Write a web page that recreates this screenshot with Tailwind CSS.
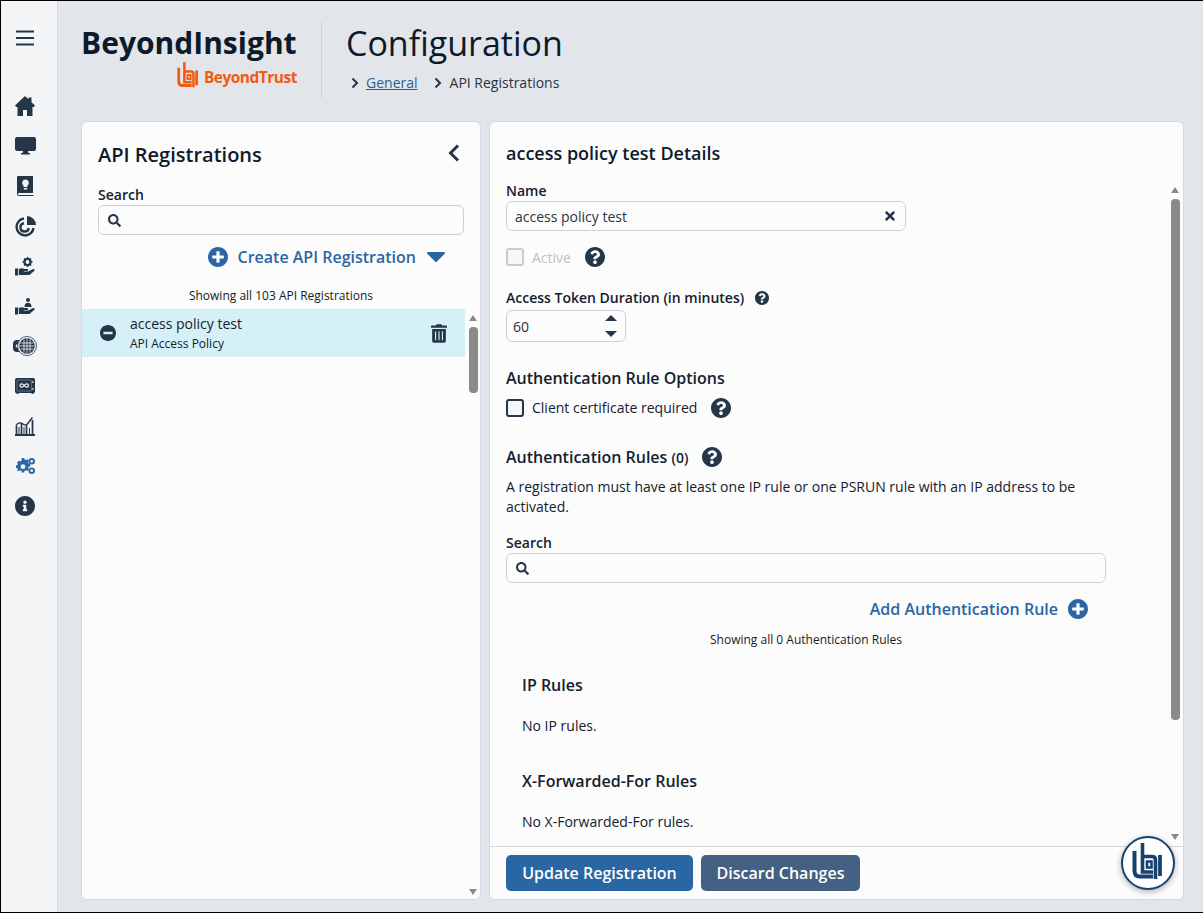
<!DOCTYPE html>
<html lang="en">
<head>
<meta charset="utf-8">
<title>API Registrations</title>
<script src="https://cdn.jsdelivr.net/npm/@tailwindcss/browser@4"></script>
</head>
<body class="font-['Open_Sans',sans-serif] text-[14px] text-[#14202e]">
<div class="w-[1203px] h-[913px] flex border-t border-l border-b border-black bg-[#e2e6eb] overflow-hidden">
  <!-- sidebar -->
  <nav class="w-[57px] shrink-0 bg-[#f3f5f7] border-r border-[#d5d9df] flex flex-col items-center pr-[8px] text-[#243648]">
    <svg class="mt-[29px] w-[18px] h-[16px]" viewBox="0 0 18 16"><path d="M0 1.500h18M0 8h18M0 14.500h18" stroke="#243648" stroke-width="2"/></svg>
    <div class="mt-[40px] flex flex-col">
      <div class="h-[40px] w-[40px] flex items-center justify-center"><svg class="w-[20px] h-[20px]" viewBox="0 0 20 20" fill="currentColor"><path d="M10 0l3.500 3.300V1.500h3v4.700L20 9.500 18.800 11H17.500v9H12v-6H8v6H2.500v-9H1.200L0 9.500z"/></svg></div>
      <div class="h-[40px] w-[40px] flex items-center justify-center"><svg class="w-[21px] h-[18px]" viewBox="0 0 21 18" fill="currentColor"><path d="M2 0h17a2 2 0 0 1 2 2v10a2 2 0 0 1-2 2h-6l.4 2H15v1.500H6V16h1.600L8 14H2a2 2 0 0 1-2-2V2a2 2 0 0 1 2-2z"/></svg></div>
      <div class="h-[40px] w-[40px] flex items-center justify-center"><svg class="w-[17px] h-[20px]" viewBox="0 0 17 20"><path d="M1 0h15v17H2a1 1 0 0 0 0 2h14.500v1H2a2 2 0 0 1-2-2V1a1 1 0 0 1 1-1z" fill="currentColor"/><path d="M8.500 3.500a3.400 3.400 0 0 0-2 6.100V11h4V9.600a3.400 3.400 0 0 0-2-6.100zM6.800 12h3.400v1.400H6.800z" fill="#f3f5f7"/></svg></div>
      <div class="h-[40px] w-[40px] flex items-center justify-center"><svg class="w-[21px] h-[21px]" viewBox="0 0 21 21" fill="none" stroke="currentColor" stroke-width="2.400"><path d="M9 2.500a8.500 8.500 0 1 0 9.500 9.500"/><path d="M9 7.200a4.200 4.200 0 1 0 4.800 4.800"/><path d="M12 0a9 9 0 0 1 9 9h-9z" fill="currentColor" stroke="none"/></svg></div>
      <div class="h-[40px] w-[40px] flex items-center justify-center"><svg class="w-[20px] h-[19px]" viewBox="0 0 20 19" fill="currentColor"><path d="M0 11.500h3.200V18.500H0zM4 12c2-1.100 3.800-1 5.500 0h2.700a1 1 0 0 1 0 2H8.800v.5h4.400l4.900-2.400a1.100 1.100 0 0 1 1.300 1.700L14.500 18H4z"/><circle cx="12.500" cy="5" r="3" fill="none" stroke="currentColor" stroke-width="2.200"/><path d="M12.500 0v2M12.500 8v2M7.500 5h2M15.500 5h2M9 1.500l1.400 1.400M14.600 7.100L16 8.500M16 1.500l-1.400 1.400M10.400 7.100L9 8.500" stroke="currentColor" stroke-width="1.600"/></svg></div>
      <div class="h-[40px] w-[40px] flex items-center justify-center"><svg class="w-[20px] h-[17px]" viewBox="0 0 20 17" fill="currentColor"><path d="M0 9.500h3.200v7H0zM4 10c2-1.100 3.800-1 5.500 0h2.700a1 1 0 0 1 0 2H8.800v.5h4.400l4.900-2.400a1.100 1.100 0 0 1 1.300 1.700L14.500 16H4z"/><circle cx="13" cy="2" r="2"/><path d="M9.500 9c0-3 1.300-4.300 3.500-4.300S16.500 6 16.500 9z"/></svg></div>
      <div class="h-[40px] w-[40px] flex items-center justify-center"><svg class="w-[24px] h-[24px]" viewBox="0 -3 24 24"><path d="M4 3h8v12H4a4 4 0 0 1-4-4V7a4 4 0 0 1 4-4z" fill="currentColor"/><circle cx="4.500" cy="9" r="1.800" fill="#f3f5f7"/><circle cx="14" cy="9" r="9.500" fill="#f3f5f7" stroke="currentColor" stroke-width=".8"/><circle cx="14" cy="9" r="7.800" fill="currentColor"/><path d="M11 2.500v13M14 1.500v15M17 2.500v13M7.500 6h13M6.500 9h15M7.500 12h13" stroke="#f3f5f7" stroke-width=".8"/></svg></div>
      <div class="h-[40px] w-[40px] flex items-center justify-center"><svg class="w-[20px] h-[16px]" viewBox="0 0 20 16"><rect width="20" height="15" rx="1.500" fill="currentColor"/><rect x="17.300" y="3" width="1" height="2" fill="#f3f5f7"/><rect x="17.300" y="10" width="1" height="2" fill="#f3f5f7"/><rect x="2" y="2" width="14.500" height="11" rx=".5" fill="currentColor" stroke="#8795a3" stroke-width=".6"/><path d="M9.200 7.500c-1-1.300-1.700-1.700-2.500-1.700a1.700 1.700 0 0 0 0 3.400c.8 0 1.500-.4 2.500-1.700s1.700-1.700 2.500-1.700a1.700 1.700 0 0 1 0 3.400c-.8 0-1.500-.4-2.500-1.700z" fill="none" stroke="#f3f5f7" stroke-width="1.200"/><path d="M1.500 15h2v1h-2zM16.500 15h2v1h-2z" fill="currentColor"/></svg></div>
      <div class="h-[40px] w-[40px] flex items-center justify-center"><svg class="w-[20px] h-[20px]" viewBox="0 0 20 20" fill="none" stroke="currentColor"><path d="M0 19h20" stroke-width="2"/><path d="M1.500 18V9.500M6.500 18V7.500M11.500 18V9.500M17.500 18V4" stroke-width="1.700"/><path d="M4 18v-7M9 18v-7M14.500 18v-6" stroke-width="1"/><path d="M1 9.500c1.500-2.500 3-3 5-2.500s3 2.500 5.500 2L17.500 1.500" stroke-width="1.400"/></svg></div>
      <div class="h-[40px] w-[40px] flex items-center justify-center"><svg class="w-[19px] h-[16px]" viewBox="0 0 19 16" fill="#2a66a3"><path fill-rule="evenodd" d="M5.800 2.500h2.400l.4 1.600 1.100.5 1.500-.8 1.700 1.700-.8 1.500.5 1.100 1.600.4v2.400l-1.600.4-.5 1.100.8 1.500-1.700 1.700-1.500-.8-1.100.5-.4 1.600H5.800l-.4-1.600-1.100-.5-1.500.8L1.100 15.400l.8-1.500-.5-1.100L-.2 12.400V10l1.600-.4.500-1.100-.8-1.500 1.700-1.700 1.500.8 1.100-.5zM7 8.800a2.400 2.400 0 1 0 0 4.800 2.400 2.400 0 0 0 0-4.800z" transform="translate(0 -2.500)"/><circle cx="15.700" cy="3.300" r="2.300" fill="none" stroke="#2a66a3" stroke-width="1.900"/><circle cx="15.700" cy="12.700" r="2.300" fill="none" stroke="#2a66a3" stroke-width="1.900"/></svg></div>
      <div class="h-[40px] w-[40px] flex items-center justify-center"><svg class="w-[20px] h-[20px]" viewBox="8 8 496 496" fill="currentColor"><path d="M256 8C119.043 8 8 119.083 8 256c0 136.997 111.043 248 248 248s248-111.003 248-248C504 119.083 392.957 8 256 8zm0 110c23.196 0 42 18.804 42 42s-18.804 42-42 42-42-18.804-42-42 18.804-42 42-42zm56 254c0 6.627-5.373 12-12 12h-88c-6.627 0-12-5.373-12-12v-24c0-6.627 5.373-12 12-12h12v-64h-12c-6.627 0-12-5.373-12-12v-24c0-6.627 5.373-12 12-12h64c6.627 0 12 5.373 12 12v100h12c6.627 0 12 5.373 12 12v24z"/></svg></div>
    </div>
  </nav>

  <!-- main -->
  <div class="flex-1 min-w-0 flex flex-col pl-[23px] pr-[19px]">
    <header class="h-[120px] shrink-0 flex items-start pt-[21px]">
      <div class="w-[240px] flex flex-col">
        <div class="text-[30px] leading-[40px] font-bold text-[#0d1a29] mt-[1px]">BeyondInsight</div>
        <div class="flex justify-end items-center gap-[6px] pr-[24px] mt-[-2px]">
          <svg class="w-[21px] h-[28px]" viewBox="12 8 30 37" fill="none" stroke="#f15a0f"><path d="M14.500 16V36Q14.500 41.500 20 41.500H33" stroke-width="4"/><path d="M22.500 8V37H33" stroke-width="3.600"/><path d="M22.500 21.500H32Q35.500 21.500 35.500 25V44" stroke-width="3.600"/><rect x="27" y="26.500" width="4.500" height="6" stroke-width="2.600"/><path d="M40 20V41" stroke-width="3.800"/></svg>
          <span class="text-[15.500px] leading-[20px] font-bold text-[#f15a0f] tracking-[-0.500px] pt-[3px]">BeyondTrust</span>
        </div>
      </div>
      <div class="w-px h-[76px] bg-[#cdd2d8]"></div>
      <div class="ml-[24px] flex flex-col mt-[-1px]">
        <h1 class="text-[34px] leading-[44px] text-[#0d1a29] font-normal">Configuration</h1>
        <div class="flex items-center mt-[8px] ml-[5px] leading-[20px]">
          <svg class="w-[8px] h-[12px] mr-[7px]" viewBox="0 0 8 12" fill="none" stroke="#243648" stroke-width="2"><path d="M1.500 1.500L6 6l-4.500 4.500"/></svg>
          <a class="text-[#2a5f97] underline">General</a>
          <svg class="w-[8px] h-[12px] ml-[16px] mr-[8px]" viewBox="0 0 8 12" fill="none" stroke="#243648" stroke-width="2"><path d="M1.500 1.500L6 6l-4.500 4.500"/></svg>
          <span class="text-[#2b3440]">API Registrations</span>
        </div>
      </div>
    </header>

    <div class="flex gap-[8px] h-[779px]">
      <!-- left panel -->
      <section class="w-[400px] shrink-0 bg-[#fcfcfc] border border-[#d5d9df] rounded-[6px] flex flex-col overflow-hidden">
        <div class="px-[16px]">
          <div class="flex justify-between pt-[18px]">
            <h2 class="text-[20px] leading-[30px] font-semibold text-[#0d1a29]">API Registrations</h2>
            <svg class="w-[12px] h-[20px] mr-[4px] mt-[3px]" viewBox="0 0 12 20" fill="none" stroke="#243648" stroke-width="3"><path d="M10 2.500L2.500 10l7.500 7.500"/></svg>
          </div>
          <label class="block mt-[15px] leading-[20px] font-semibold">Search</label>
          <div class="w-[366px] h-[30px] border border-[#ccd0d5] rounded-[6px] flex items-center pl-[9px]">
            <svg class="w-[13px] h-[13px]" viewBox="0 0 512 512" fill="#243648"><path d="M505 442.700L405.300 343c-4.500-4.500-10.600-7-17-7H372c27.600-35.300 44-79.700 44-128C416 93.100 322.900 0 208 0S0 93.100 0 208s93.100 208 208 208c48.300 0 92.700-16.400 128-44v16.300c0 6.400 2.500 12.500 7 17l99.700 99.700c9.400 9.400 24.600 9.400 33.900 0l28.300-28.300c9.400-9.400 9.400-24.600.1-34zM208 336c-70.700 0-128-57.200-128-128 0-70.700 57.200-128 128-128 70.700 0 128 57.200 128 128 0 70.700-57.200 128-128 128z"/></svg>
          </div>
          <div class="flex items-center justify-end w-[366px] h-[24px] mt-[10px] pr-[19px] text-[#2a66a3]">
            <svg class="w-[20px] h-[20px]" viewBox="8 8 496 496" fill="currentColor"><path d="M256 8C119 8 8 119 8 256s111 248 248 248 248-111 248-248S393 8 256 8zm144 276c0 6.600-5.400 12-12 12h-92v92c0 6.600-5.400 12-12 12h-56c-6.600 0-12-5.400-12-12v-92h-92c-6.600 0-12-5.400-12-12v-56c0-6.600 5.400-12 12-12h92v-92c0-6.600 5.400-12 12-12h56c6.600 0 12 5.400 12 12v92h92c6.600 0 12 5.400 12 12v56z"/></svg>
            <span class="text-[16px] font-semibold ml-[10px]">Create API Registration</span>
            <svg class="w-[18px] h-[10px] ml-[11px]" viewBox="0 0 18 10" fill="currentColor"><path d="M1 0h16a1 1 0 0 1 .7 1.700L9.700 9.700a1 1 0 0 1-1.400 0L.3 1.700A1 1 0 0 1 1 0z"/></svg>
          </div>
          <div class="w-[366px] text-center text-[12px] leading-[16px] mt-[19px] text-[#1a1a1a]">Showing all 103 API Registrations</div>
        </div>
        <div class="flex flex-1 min-h-0 mt-[5px]">
          <div class="w-[383px] shrink-0">
            <div class="h-[48px] bg-[#d6f0f7] flex items-center pl-[18px] pr-[18px]">
              <svg class="w-[16px] h-[16px]" viewBox="8 8 496 496" fill="#243648"><path d="M256 8C119 8 8 119 8 256s111 248 248 248 248-111 248-248S393 8 256 8zM124 296c-6.600 0-12-5.400-12-12v-56c0-6.600 5.400-12 12-12h264c6.600 0 12 5.400 12 12v56c0 6.600-5.400 12-12 12H124z"/></svg>
              <div class="ml-[14px] flex-1">
                <div class="leading-[20px] text-[#14202e]">access policy test</div>
                <div class="text-[12px] leading-[16px] mt-[2px] text-[#14202e]">API Access Policy</div>
              </div>
              <svg class="w-[16px] h-[19px]" viewBox="0 0 448 512" fill="#243648"><path d="M32 464a48 48 0 0 0 48 48h288a48 48 0 0 0 48-48V128H32zm272-256a16 16 0 0 1 32 0v224a16 16 0 0 1-32 0zm-96 0a16 16 0 0 1 32 0v224a16 16 0 0 1-32 0zm-96 0a16 16 0 0 1 32 0v224a16 16 0 0 1-32 0zM432 32H312l-9.400-18.700A24 24 0 0 0 281.100 0H166.800a23.720 23.720 0 0 0-21.400 13.300L136 32H16A16 16 0 0 0 0 48v32a16 16 0 0 0 16 16h416a16 16 0 0 0 16-16V48a16 16 0 0 0-16-16z"/></svg>
            </div>
          </div>
          <div class="w-[12px] ml-[2px] flex flex-col items-center pb-[4px] pt-[6px]">
            <div class="w-0 h-0 border-l-[4px] border-r-[4px] border-b-[6px] border-l-transparent border-r-transparent border-b-[#8a8a8a]"></div>
            <div class="w-[9px] h-[66px] rounded-[4px] bg-[#8a8a8a] mt-[6px]"></div>
            <div class="flex-1"></div>
            <div class="w-0 h-0 border-l-[4px] border-r-[4px] border-t-[6px] border-l-transparent border-r-transparent border-t-[#8a8a8a]"></div>
          </div>
        </div>
      </section>

      <!-- right panel -->
      <section class="w-[695px] shrink-0 bg-[#fcfcfc] border border-[#d5d9df] rounded-[6px] flex flex-col overflow-hidden relative">
        <h2 class="text-[18px] leading-[24px] font-semibold text-[#0d1a29] pl-[16px] pt-[19px] h-[56px] shrink-0">access policy test Details</h2>
        <div class="flex h-[668px] shrink-0">
          <div class="flex-1 min-w-0 overflow-hidden pl-[16px]">
            <label class="block mt-[3px] leading-[20px] font-semibold">Name</label>
            <div class="w-[400px] h-[30px] border border-[#ccd0d5] rounded-[6px] flex items-center pl-[8px] pr-[9px] justify-between">
              <span class="text-[#2b3440]">access policy test</span>
              <svg class="w-[12px] h-[14px]" viewBox="0 0 352 512" fill="#243648"><path d="M242.720 256l100.070-100.070c12.280-12.280 12.280-32.190 0-44.480l-22.240-22.240c-12.280-12.280-32.190-12.280-44.480 0L176 189.280 75.930 89.210c-12.280-12.280-32.190-12.280-44.480 0L9.210 111.450c-12.280 12.280-12.280 32.190 0 44.480L109.280 256 9.210 356.070c-12.280 12.280-12.280 32.190 0 44.480l22.240 22.240c12.280 12.280 32.200 12.280 44.480 0L176 322.720l100.070 100.070c12.280 12.280 32.200 12.280 44.480 0l22.240-22.240c12.280-12.280 12.280-32.190 0-44.480L242.720 256z"/></svg>
            </div>
            <div class="flex items-center h-[20px] mt-[16px]">
              <span class="w-[18px] h-[18px] rounded-[3px] border-2 border-[#c9cccf] bg-[#f6f7f8]"></span>
              <span class="ml-[8px] text-[#bdc0c4]">Active</span>
              <svg class="w-[20px] h-[20px] ml-[14px]" viewBox="8 8 496 496" fill="#243648"><path d="M504 256c0 136.997-111.043 248-248 248S8 392.997 8 256C8 119.083 119.043 8 256 8s248 111.083 248 248zM262.655 90c-54.497 0-89.255 22.957-116.549 63.758-3.536 5.286-2.353 12.415 2.715 16.258l34.699 26.310c5.205 3.947 12.621 3.008 16.665-2.122 17.864-22.658 30.113-35.797 57.303-35.797 20.429 0 45.698 13.148 45.698 32.958 0 14.976-12.363 22.667-32.534 33.976C247.128 238.528 216 254.941 216 296v4c0 6.627 5.373 12 12 12h56c6.627 0 12-5.373 12-12v-1.333c0-28.462 83.186-29.647 83.186-106.667 0-58.002-60.165-102-116.531-102zM256 338c-25.365 0-46 20.635-46 46 0 25.364 20.635 46 46 46s46-20.636 46-46c0-25.365-20.635-46-46-46z"/></svg>
            </div>
            <div class="flex items-center h-[20px] mt-[21px]">
              <span class="font-semibold mb-[2px]">Access Token Duration (in minutes)</span>
              <svg class="w-[14px] h-[14px] ml-[11px]" viewBox="8 8 496 496" fill="#243648"><path d="M504 256c0 136.997-111.043 248-248 248S8 392.997 8 256C8 119.083 119.043 8 256 8s248 111.083 248 248zM262.655 90c-54.497 0-89.255 22.957-116.549 63.758-3.536 5.286-2.353 12.415 2.715 16.258l34.699 26.310c5.205 3.947 12.621 3.008 16.665-2.122 17.864-22.658 30.113-35.797 57.303-35.797 20.429 0 45.698 13.148 45.698 32.958 0 14.976-12.363 22.667-32.534 33.976C247.128 238.528 216 254.941 216 296v4c0 6.627 5.373 12 12 12h56c6.627 0 12-5.373 12-12v-1.333c0-28.462 83.186-29.647 83.186-106.667 0-58.002-60.165-102-116.531-102zM256 338c-25.365 0-46 20.635-46 46 0 25.364 20.635 46 46 46s46-20.636 46-46c0-25.365-20.635-46-46-46z"/></svg>
            </div>
            <div class="w-[120px] h-[32px] mt-[2px] border border-[#ccd0d5] rounded-[6px] flex items-center justify-between pl-[6px] pr-[8px]">
              <span class="text-[#2b3440]">60</span>
              <div class="flex flex-col gap-[10px]">
                <div class="w-0 h-0 border-l-[6px] border-r-[6px] border-b-[6px] border-l-transparent border-r-transparent border-b-[#243648]"></div>
                <div class="w-0 h-0 border-l-[6px] border-r-[6px] border-t-[6px] border-l-transparent border-r-transparent border-t-[#243648]"></div>
              </div>
            </div>
            <h3 class="text-[16px] leading-[24px] font-semibold mt-[24px] text-[#14202e]">Authentication Rule Options</h3>
            <div class="flex items-center h-[20px] mt-[8px]">
              <span class="w-[18px] h-[18px] rounded-[3px] border-2 border-[#243648] bg-[#f6f7f8]"></span>
              <span class="ml-[8px] mb-[2px]">Client certificate required</span>
              <svg class="w-[20px] h-[20px] ml-[14px]" viewBox="8 8 496 496" fill="#243648"><path d="M504 256c0 136.997-111.043 248-248 248S8 392.997 8 256C8 119.083 119.043 8 256 8s248 111.083 248 248zM262.655 90c-54.497 0-89.255 22.957-116.549 63.758-3.536 5.286-2.353 12.415 2.715 16.258l34.699 26.310c5.205 3.947 12.621 3.008 16.665-2.122 17.864-22.658 30.113-35.797 57.303-35.797 20.429 0 45.698 13.148 45.698 32.958 0 14.976-12.363 22.667-32.534 33.976C247.128 238.528 216 254.941 216 296v4c0 6.627 5.373 12 12 12h56c6.627 0 12-5.373 12-12v-1.333c0-28.462 83.186-29.647 83.186-106.667 0-58.002-60.165-102-116.531-102zM256 338c-25.365 0-46 20.635-46 46 0 25.364 20.635 46 46 46s46-20.636 46-46c0-25.365-20.635-46-46-46z"/></svg>
            </div>
            <div class="flex items-center h-[24px] mt-[27px]">
              <h3 class="text-[16px] font-semibold text-[#14202e]">Authentication Rules <span class="text-[14px]">(0)</span></h3>
              <svg class="w-[20px] h-[20px] ml-[14px]" viewBox="8 8 496 496" fill="#243648"><path d="M504 256c0 136.997-111.043 248-248 248S8 392.997 8 256C8 119.083 119.043 8 256 8s248 111.083 248 248zM262.655 90c-54.497 0-89.255 22.957-116.549 63.758-3.536 5.286-2.353 12.415 2.715 16.258l34.699 26.310c5.205 3.947 12.621 3.008 16.665-2.122 17.864-22.658 30.113-35.797 57.303-35.797 20.429 0 45.698 13.148 45.698 32.958 0 14.976-12.363 22.667-32.534 33.976C247.128 238.528 216 254.941 216 296v4c0 6.627 5.373 12 12 12h56c6.627 0 12-5.373 12-12v-1.333c0-28.462 83.186-29.647 83.186-106.667 0-58.002-60.165-102-116.531-102zM256 338c-25.365 0-46 20.635-46 46 0 25.364 20.635 46 46 46s46-20.636 46-46c0-25.365-20.635-46-46-46z"/></svg>
            </div>
            <p class="w-[600px] leading-[20px] mt-[8px]">A registration must have at least one IP rule or one PSRUN rule with an IP address to be activated.</p>
            <label class="block mt-[16px] leading-[20px] font-semibold">Search</label>
            <div class="w-[600px] h-[30px] border border-[#ccd0d5] rounded-[6px] flex items-center pl-[9px]">
              <svg class="w-[13px] h-[13px]" viewBox="0 0 512 512" fill="#243648"><path d="M505 442.700L405.300 343c-4.500-4.500-10.600-7-17-7H372c27.600-35.300 44-79.700 44-128C416 93.100 322.900 0 208 0S0 93.100 0 208s93.100 208 208 208c48.300 0 92.700-16.400 128-44v16.300c0 6.400 2.500 12.500 7 17l99.700 99.700c9.400 9.400 24.600 9.400 33.900 0l28.300-28.300c9.400-9.400 9.400-24.600.1-34zM208 336c-70.700 0-128-57.200-128-128 0-70.700 57.200-128 128-128 70.700 0 128 57.200 128 128 0 70.700-57.200 128-128 128z"/></svg>
            </div>
            <div class="w-[600px] h-[24px] mt-[14px] flex items-center justify-end pr-[18px] text-[#2a66a3]">
              <span class="text-[16px] font-semibold">Add Authentication Rule</span>
              <svg class="w-[20px] h-[20px] ml-[10px]" viewBox="8 8 496 496" fill="currentColor"><path d="M256 8C119 8 8 119 8 256s111 248 248 248 248-111 248-248S393 8 256 8zm144 276c0 6.600-5.400 12-12 12h-92v92c0 6.600-5.400 12-12 12h-56c-6.600 0-12-5.400-12-12v-92h-92c-6.600 0-12-5.400-12-12v-56c0-6.600 5.400-12 12-12h92v-92c0-6.600 5.400-12 12-12h56c6.600 0 12 5.400 12 12v92h92c6.600 0 12 5.400 12 12v56z"/></svg>
            </div>
            <div class="w-[600px] text-center text-[12px] leading-[16px] mt-[11px] text-[#1a1a1a]">Showing all 0 Authentication Rules</div>
            <h3 class="text-[16px] leading-[24px] font-semibold mt-[25px] pl-[16px] text-[#14202e]">IP Rules</h3>
            <p class="leading-[20px] mt-[19px] pl-[16px]">No IP rules.</p>
            <h3 class="text-[16px] leading-[24px] font-semibold mt-[33px] pl-[16px] text-[#14202e]">X-Forwarded-For Rules</h3>
            <p class="leading-[20px] mt-[19px] pl-[16px]">No X-Forwarded-For rules.</p>
          </div>
          <div class="w-[12px] mr-[2px] flex flex-col items-center pt-[9px] pb-[6px]">
            <div class="w-0 h-0 border-l-[4px] border-r-[4px] border-b-[6px] border-l-transparent border-r-transparent border-b-[#8a8a8a]"></div>
            <div class="w-[9px] h-[521px] rounded-[4px] bg-[#8a8a8a] mt-[6px]"></div>
            <div class="flex-1"></div>
            <div class="w-0 h-0 border-l-[4px] border-r-[4px] border-t-[6px] border-l-transparent border-r-transparent border-t-[#8a8a8a]"></div>
          </div>
        </div>
        <footer class="flex-1 border-t border-[#d5d9df] flex items-start gap-[8px] pl-[16px] pt-[8px]">
          <button class="h-[36px] w-[187px] rounded-[5px] bg-[#2a66a3] text-white text-[16px] font-semibold">Update Registration</button>
          <button class="h-[36px] w-[159px] rounded-[5px] bg-[#446184] text-white text-[16px] font-semibold">Discard Changes</button>
        </footer>
        <div class="absolute left-[631px] bottom-[9px] w-[54px] h-[54px] rounded-full bg-white border-2 border-[#17426f] shadow-[0_2px_6px_rgba(0,0,0,0.3)] flex items-center justify-center">
          <svg class="w-[50px] h-[50px]" viewBox="3 3 50 50" fill="none" stroke="#17426f"><path d="M14.500 16V36Q14.500 41.500 20 41.500H33" stroke-width="4"/><path d="M22.500 8V37H33" stroke-width="3.600"/><path d="M22.500 21.500H32Q35.500 21.500 35.500 25V44" stroke-width="3.600"/><rect x="27" y="26.500" width="4.500" height="6" stroke-width="2.600"/><path d="M40 20V41" stroke-width="3.800"/></svg>
        </div>
      </section>
    </div>
  </div>
</div>
</body>
</html>
